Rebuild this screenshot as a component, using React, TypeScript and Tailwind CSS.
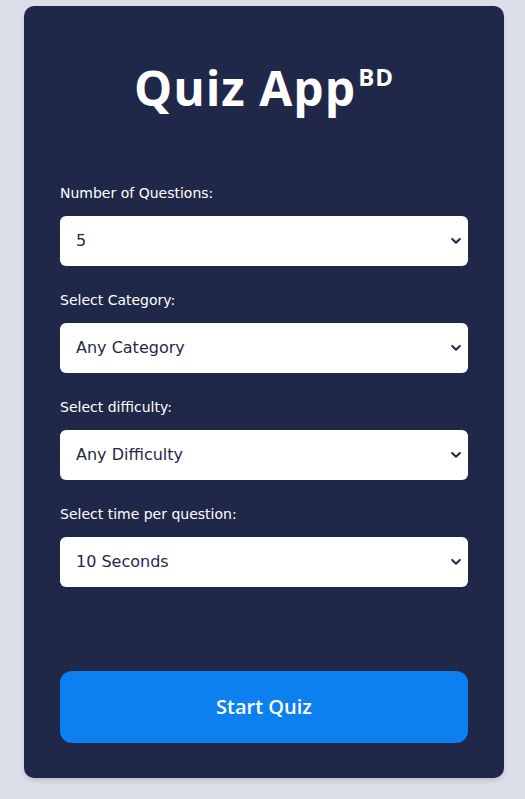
import { useState } from 'react';

const fields = [
  { id: 'amount', label: 'Number of Questions:', options: ['5', '10', '15', '20'] },
  { id: 'category', label: 'Select Category:', options: ['Any Category', 'General Knowledge', 'Science & Nature', 'History'] },
  { id: 'difficulty', label: 'Select difficulty:', options: ['Any Difficulty', 'Easy', 'Medium', 'Hard'] },
  { id: 'time', label: 'Select time per question:', options: ['10 Seconds', '15 Seconds', '20 Seconds', '30 Seconds'] },
];

function Chevron() {
  return (
    <svg
      className="pointer-events-none absolute right-[7px] top-1/2 -translate-y-1/2"
      width="10"
      height="7"
      viewBox="0 0 10 7"
      fill="none"
    >
      <path d="M1.2 1.5 L5 5.2 L8.8 1.5" stroke="#1f2847" strokeWidth="2" strokeLinecap="round" strokeLinejoin="round" />
    </svg>
  );
}

export default function App() {
  const [values, setValues] = useState<Record<string, string>>({
    amount: '5',
    category: 'Any Category',
    difficulty: 'Any Difficulty',
    time: '10 Seconds',
  });

  return (
    <div className="min-h-screen bg-[#dcdfea] pt-[6px] font-['DejaVu_Sans',sans-serif]">
      <div className="ml-6 w-[480px] rounded-[10px] bg-[#1f2848] px-9 pt-[50px] pb-[35px] shadow-md">
        <h1 className="text-center font-['Open_Sans',sans-serif] text-[48px] font-bold leading-[64px] tracking-[1px] text-white">
          Quiz App<sup className="-top-5 ml-[2px] text-[24px] font-bold">BD</sup>
        </h1>

        {/* form fields */}
        <form className="mt-[63px]" onSubmit={(e) => e.preventDefault()}>
          {fields.map((field) => (
            <div key={field.id} className="mb-[24px]">
              <label htmlFor={field.id} className="mb-[12px] block text-[14px] leading-[21px] text-white">
                {field.label}
              </label>
              <div className="relative">
                <select
                  id={field.id}
                  value={values[field.id]}
                  onChange={(e) => setValues({ ...values, [field.id]: e.target.value })}
                  className="h-[50px] w-full appearance-none rounded-[6px] bg-white pl-4 text-[16px] text-[#1f2847] outline-none"
                >
                  {field.options.map((opt) => (
                    <option key={opt}>{opt}</option>
                  ))}
                </select>
                <Chevron />
              </div>
            </div>
          ))}

          <button
            type="submit"
            className="mt-[60px] h-[72px] w-full rounded-[12px] bg-[#0b80ee] font-['Open_Sans',sans-serif] text-[20px] font-semibold text-white"
          >
            Start Quiz
          </button>
        </form>
      </div>
    </div>
  );
}
